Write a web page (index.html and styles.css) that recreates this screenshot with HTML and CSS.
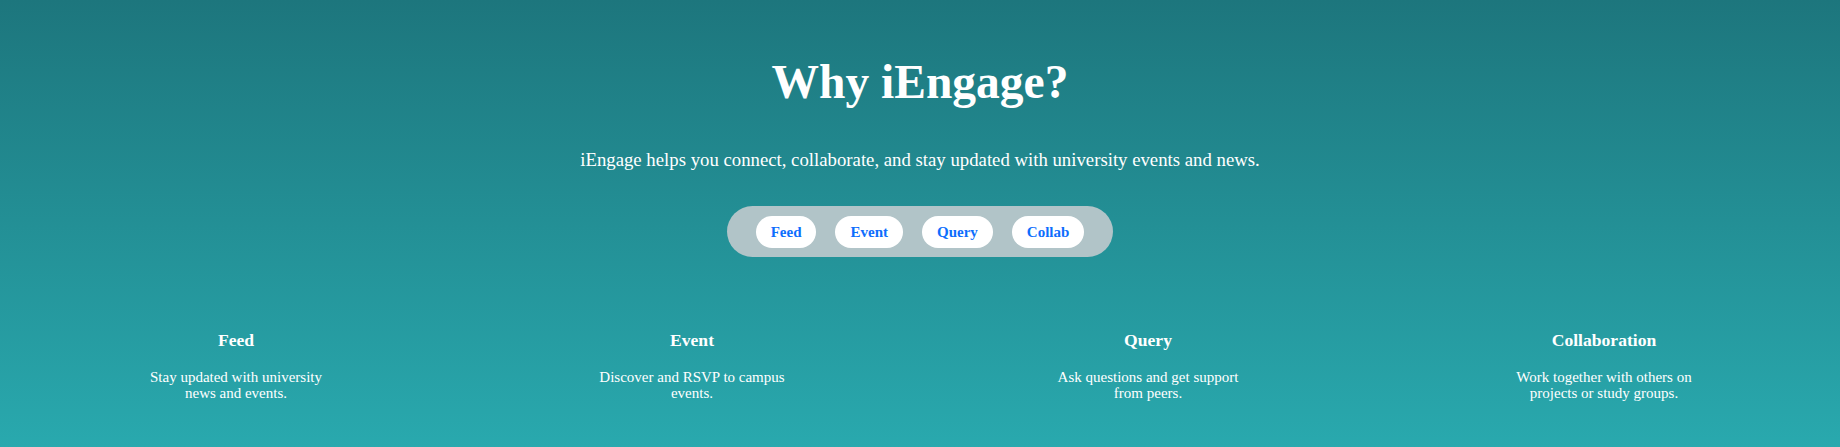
FILE: index.html
```html
<!DOCTYPE html>
<html lang="en">
<head>
<meta charset="utf-8">
<title>Why iEngage?</title>
<link rel="stylesheet" href="styles.css">
</head>
<body>
<section class="why">
  <h1 class="why-title">Why iEngage?</h1>
  <p class="why-lead">iEngage helps you connect, collaborate, and stay updated with university events and news.</p>
  <div class="pill-bar">
    <button class="pill">Feed</button>
    <button class="pill">Event</button>
    <button class="pill">Query</button>
    <button class="pill">Collab</button>
  </div>
  <div class="features">
    <div class="feature">
      <h3 class="feature-title">Feed</h3>
      <p class="feature-text">Stay updated with university news and events.</p>
    </div>
    <div class="feature">
      <h3 class="feature-title">Event</h3>
      <p class="feature-text">Discover and RSVP to campus events.</p>
    </div>
    <div class="feature">
      <h3 class="feature-title">Query</h3>
      <p class="feature-text">Ask questions and get support from peers.</p>
    </div>
    <div class="feature">
      <h3 class="feature-title">Collaboration</h3>
      <p class="feature-text">Work together with others on projects or study groups.</p>
    </div>
  </div>
</section>
</body>
</html>
```

FILE: styles.css
```css
html, body {
  margin: 0;
  padding: 0;
}

body {
  font-family: "Liberation Serif", "Times New Roman", serif;
  color: #ffffff;
}

.why {
  min-height: 447px;
  box-sizing: border-box;
  padding: 55px 8px 0;
  display: flex;
  flex-direction: column;
  align-items: center;
  background: linear-gradient(to bottom, #1d767d 0%, #29a9ae 100%);
}

.why-title {
  margin: 0;
  font-size: 47.5px;
  font-weight: bold;
  line-height: normal;
}

.why-lead {
  margin: 40px 0 0;
  font-size: 18.75px;
  line-height: normal;
}

.pill-bar {
  margin-top: 35px;
  display: flex;
  gap: 19px;
  padding: 9.5px 29px;
  background: #b1c4c8;
  border-radius: 999px;
}

.pill {
  font-family: "Liberation Serif", "Times New Roman", serif;
  font-size: 15px;
  font-weight: bold;
  line-height: 18px;
  color: #0d6efd;
  background: #ffffff;
  border: none;
  border-radius: 999px;
  padding: 7px 15px;
  cursor: pointer;
}

.features {
  align-self: stretch;
  margin-top: 73px;
  display: grid;
  grid-template-columns: repeat(4, 1fr);
}

.feature {
  display: flex;
  flex-direction: column;
  align-items: center;
  text-align: center;
}

.feature-title {
  margin: 0;
  font-size: 17.6px;
  font-weight: bold;
  line-height: normal;
}

.feature-text {
  margin: 17.5px 0 0;
  max-width: 200px;
  font-size: 15px;
  line-height: 16.5px;
}
```
